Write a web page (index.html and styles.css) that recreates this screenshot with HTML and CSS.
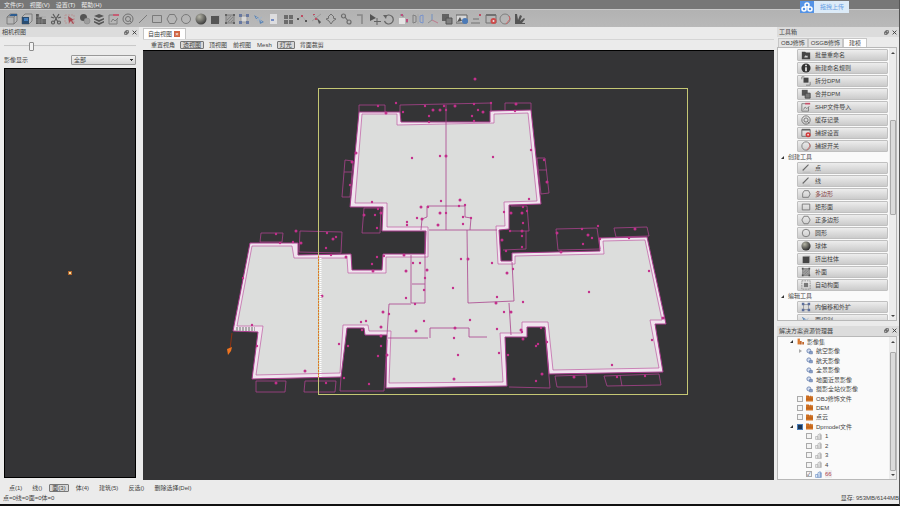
FILE: index.html
```
<!DOCTYPE html>
<html lang="zh-CN">
<head>
<meta charset="utf-8" />
<title>DPModeler</title>
<link rel="stylesheet" href="styles.css">
</head>

<body>
<svg class="defs" aria-hidden="true">
  <defs>
    <radialGradient id="ball" cx="0.35" cy="0.3" r="0.7"><stop offset="0" stop-color="#b5b5a5"/><stop offset="1" stop-color="#2e2e2e"/></radialGradient>
    <symbol id="i-open" viewBox="0 0 12 12"><path d="M1 4h7v7H1zM1 4l3-3h7l-3 3M11 1v7l-3 3" fill="none" stroke="#666" stroke-width=".8"/><path d="M3 3l2-2h6v2z" fill="#174f8c"/></symbol>
    <symbol id="i-cube" viewBox="0 0 12 12"><path d="M1 4l3-3h7v7l-3 3H1z" fill="#bbb" stroke="#666" stroke-width=".8"/><path d="M1 4h7v7H1z" fill="#123a63"/><path d="M3 5h4v3H3z" fill="#2f74bf"/></symbol>
    <symbol id="i-city" viewBox="0 0 12 12"><path d="M1 1h3v10H1zM4 4h3v7H4zM7 6h4v5H7z" fill="#4a4a4a"/><path d="M1 4h10M1 7h10M1 9h10M4 1v10M7 3v8" stroke="#999" stroke-width=".5"/></symbol>
    <symbol id="i-cut" viewBox="0 0 12 12"><path d="M3 1l5 8M9 1L4 9M1 4l3 1M11 4L8 5" stroke="#4a4a4a" stroke-width="1.2"/><g fill="none" stroke="#4a4a4a" stroke-width="1.2"><circle cx="3" cy="9.5" r="1.5"/><circle cx="9" cy="9.5" r="1.5"/></g></symbol>
    <symbol id="i-pick" viewBox="0 0 12 12"><path d="M1 2h9v8H1z" fill="none" stroke="#b88" stroke-width=".8" stroke-dasharray="2 1"/><path d="M4 3l6 4-2 .5 2 3-1 .5-2-3-2 2z" fill="#a8303c"/></symbol>
    <symbol id="i-blob" viewBox="0 0 12 12"><circle cx="4.500" cy="4.500" r="3.500" fill="#444"/><circle cx="8" cy="8" r="3" fill="#999" stroke="#777" stroke-width=".5"/></symbol>
    <symbol id="i-layers" viewBox="0 0 12 12"><path d="M6 1l5 2-5 2-5-2zM1 5l5 2 5-2v1.500L6 9 1 6.500zM1 8l5 2 5-2v1.500L6 12 1 9.500z" fill="#454545"/></symbol>
    <symbol id="i-import" viewBox="0 0 12 12"><path d="M1 2h5M1 2v9h8V6M3 9l2-3 2 2 3-3" fill="none" stroke="#777"/><path d="M5 1h6v2H5z" fill="#c8506a"/></symbol>
    <symbol id="i-ring" viewBox="0 0 12 12"><circle cx="6" cy="6" r="5" fill="none" stroke="#666"/><circle cx="6" cy="6" r="2.500" fill="none" stroke="#666"/><path d="M8 8l2 2" stroke="#666"/></symbol>
    <symbol id="i-line" viewBox="0 0 12 12"><path d="M2 10l8-8" stroke="#707070"/></symbol>
    <symbol id="i-pen" viewBox="0 0 12 12"><path d="M2 9l7-7" stroke="#666" stroke-width="1.300"/><path d="M2 11h9" stroke="#aaa" stroke-width=".6"/></symbol>
    <symbol id="i-rect" viewBox="0 0 12 12"><path d="M1.500 2.500h9v7h-9z" fill="none" stroke="#707070"/></symbol>
    <symbol id="i-hex" viewBox="0 0 12 12"><path d="M3.500 1.500h5L11 6l-2.500 4.500h-5L1 6z" fill="none" stroke="#707070"/></symbol>
    <symbol id="i-poly" viewBox="0 0 12 12"><path d="M4 2h5l2 4-2 4H2V5z" fill="none" stroke="#707070"/></symbol>
    <symbol id="i-circle" viewBox="0 0 12 12"><circle cx="6" cy="6" r="4.500" fill="none" stroke="#707070"/></symbol>
    <symbol id="i-ball" viewBox="0 0 12 12"><circle cx="6" cy="6" r="5.500" fill="url(#ball)"/></symbol>
    <symbol id="i-box" viewBox="0 0 12 12"><path d="M3 2h8v7l-1 1V3z" fill="#aaa"/><path d="M2 3h8v8H2z" fill="#444"/></symbol>
    <symbol id="i-patch" viewBox="0 0 12 12"><path d="M2 2h8v8H2z" fill="#a0a0a0" stroke="#777"/><path d="M3 7l4-4M4 9l5-5M7 9l2-2" stroke="#666" stroke-width=".6"/><path d="M1 1h2v2H1zM9 1h2v2H9zM1 9h2v2H1zM9 9h2v2H9z" fill="#555"/></symbol>
    <symbol id="i-auto" viewBox="0 0 12 12"><path d="M1 1h10v10H1z" fill="none" stroke="#888" stroke-dasharray="2 1"/><path d="M3.500 3.500h5v5h-5z" fill="#777"/></symbol>
    <symbol id="i-offset" viewBox="0 0 12 12"><path d="M3 3h6v6H3z" fill="#ddd" stroke="#999"/><path d="M1 1h3v3H1zM8 1h3v3H8zM1 8h3v3H1zM8 8h3v3H8z" fill="#5b6e9c"/></symbol>
    <symbol id="i-move" viewBox="0 0 12 12"><path d="M1 2l5 3-3 1zM6 6l5 3-4 2z" fill="#4c7cb4"/><path d="M3 4l6 5M4 8l5-4" stroke="#9cb4d0"/></symbol>
    <symbol id="i-page" viewBox="0 0 12 12"><path d="M3 1h7v10H3z" fill="#e4e4e6"/><path d="M4 6h3v2H4z" fill="#6a86c8"/></symbol>
    <symbol id="i-grid" viewBox="0 0 12 12"><path d="M2 2h4v4H2zM7 2h4v4H7zM2 7h4v4H2zM7 7h4v4H7z" fill="#606060"/></symbol>
    <symbol id="i-dots" viewBox="0 0 12 12"><path d="M2 6l4-3 4 5" fill="none" stroke="#999" stroke-width=".6"/><path d="M1 5h2v2H1zM9 7h2v2H9z" fill="#444"/><path d="M5 2h2v2H5z" fill="#c03b55"/></symbol>
    <symbol id="i-node" viewBox="0 0 12 12"><path d="M2 2l8 8M10 1L1 8" stroke="#888" stroke-width=".7"/><path d="M6 5l4 4-2 2z" fill="#444"/><path d="M2 1h2v1H2zM4 5h2v2H4z" fill="#c03b55"/></symbol>
    <symbol id="i-split" viewBox="0 0 12 12"><path d="M6 1l3 3-1 1 3 1-3 2-2 3-2-3-3-2 3-1-1-1z" fill="none" stroke="#666"/></symbol>
    <symbol id="i-link" viewBox="0 0 12 12"><g fill="none" stroke="#606060" stroke-width="1.200"><circle cx="3.500" cy="3" r="2"/><circle cx="9" cy="9" r="2"/><path d="M5 4l3 4"/></g></symbol>
    <symbol id="i-pipe" viewBox="0 0 12 12"><path d="M3 2h5v9" fill="none" stroke="#808080" stroke-width="1.500"/></symbol>
    <symbol id="i-arrow" viewBox="0 0 12 12"><path d="M1 1l6 4-6 3z" fill="#444"/><path d="M8 5v7M5 8.500h7" stroke="#555"/></symbol>
    <symbol id="i-undo" viewBox="0 0 12 12"><path d="M2 4a4.500 4.500 0 1 1-.5 4" fill="none" stroke="#555" stroke-width="1.200"/><path d="M0 2l4 0-1 4z" fill="#555"/></symbol>
    <symbol id="i-scale" viewBox="0 0 12 12"><path d="M1 5h6v6H1z" fill="#eee"/><path d="M2 2h3v2M9 7v3" stroke="#777" fill="none"/><path d="M8 6h2v3H8zM3 1h2v2H3z" fill="#c03b75"/></symbol>
    <symbol id="i-mirror" viewBox="0 0 12 12"><path d="M1 2l3 1v6l-3 1z" fill="none" stroke="#777"/><path d="M11 2L8 3v6l3 1z" fill="none" stroke="#6f8ed0"/><path d="M6 1v10" stroke="#999" stroke-width=".5"/></symbol>
    <symbol id="i-axis" viewBox="0 0 12 12"><path d="M5 1v6" stroke="#668ac4"/><path d="M5 7l-4 3" stroke="#888"/><path d="M5 7l6 3" stroke="#c07088"/></symbol>
    <symbol id="i-merge" viewBox="0 0 12 12"><path d="M1 1h7v7H1z" fill="#555"/><path d="M5 5h6v6H5z" fill="#777" stroke="#444"/></symbol>
    <symbol id="i-image" viewBox="0 0 12 12"><path d="M0 2h11v8H0z" fill="#ddd" stroke="#555"/><path d="M1 9l3-5 2 4z" fill="#444"/><circle cx="9" cy="8" r="3" fill="#3a70b8"/></symbol>
    <symbol id="i-level" viewBox="0 0 12 12"><path d="M1 10h9M3 6h6" stroke="#666"/><path d="M9 1h2v2H9z" fill="#c03b55"/></symbol>
    <symbol id="i-snap" viewBox="0 0 12 12"><path d="M1 2h10v8H1z" fill="none" stroke="#666"/><path d="M1 1h10v2H1z" fill="#666"/><circle cx="8.500" cy="8" r="3" fill="#d23a3a"/><circle cx="8.500" cy="8" r="1" fill="#eee"/></symbol>
    <symbol id="i-switch" viewBox="0 0 12 12"><circle cx="6" cy="6" r="5" fill="none" stroke="#777"/><path d="M10 3l1 3-4 5" stroke="#cf5a5a" fill="none"/></symbol>
    <symbol id="i-fan" viewBox="0 0 12 12"><path d="M1 11V1h2l1 6 2-5 2 1-2 5 4-3 1 1-3 4h3v1z" fill="#444"/></symbol>
    <symbol id="i-folder" viewBox="0 0 12 12"><path d="M1 2h4l1 1h5v8H1z" fill="#444"/><path d="M4 8l2-2v1h2v2H4z" fill="#ccc"/></symbol>
    <symbol id="i-info" viewBox="0 0 12 12"><circle cx="6" cy="6" r="5.500" fill="#333"/><path d="M5 2h2v2H5zM5 5h2v5H5z" fill="#eee"/></symbol>
    <symbol id="i-part" viewBox="0 0 12 12"><path d="M3 2h6v6H3z" fill="#444"/><path d="M1 4V1h3M11 7v4H6" fill="none" stroke="#777"/></symbol>
    <symbol id="i-cam" viewBox="0 0 12 12"><circle cx="5" cy="5" r="3.500" fill="#d3dced" stroke="#6e86b4" stroke-width="1.500"/><path d="M6 6h5v4H6z" fill="#8b9fc6" stroke="#5f78a8"/></symbol>
    <symbol id="i-set" viewBox="0 0 12 12"><path d="M1 1h4v10H1z" fill="#d9772c"/><path d="M5 5h3v6H5zM9 7h3v4H9z" fill="#c0662c"/></symbol>
    <symbol id="i-orange" viewBox="0 0 12 12"><path d="M0 1h4l1 1h7v9H0z" fill="#d27324"/><path d="M4 1v3M8 1v3M0 7h12" stroke="#a44e10"/></symbol>
    <symbol id="i-model" viewBox="0 0 12 12"><path d="M1 6h4v5H1zM5 3l4-2v10H5zM9 3h2v8H9z" fill="#eee" stroke="#a5a5a5"/></symbol>
    <symbol id="i-model-on" viewBox="0 0 12 12"><path d="M1 6h4v5H1zM5 3l4-2v10H5zM9 3h2v8H9z" fill="#e8f0fb" stroke="#5d87c0"/></symbol>
    <symbol id="i-float" viewBox="0 0 8 8"><path d="M3 1h4v4H3zM1 3h4v4H1z" fill="#ddd" stroke="#333"/></symbol>
    <symbol id="i-close" viewBox="0 0 8 8"><path d="M1 1l6 6M7 1L1 7" stroke="#333" stroke-width="1.400"/></symbol>
  </defs>
</svg>

<div class="app">
  <header class="menubar">
    <button>文件(F)</button><button>视图(V)</button><button>设置(T)</button><button>帮助(H)</button>
  </header>
  <div class="toolbar" id="toolbar"></div>
  <button class="upload"><span class="upload-logo"><svg viewBox="0 0 14 12"><g fill="none" stroke="#fff" stroke-width="1.500"><circle cx="7" cy="4" r="2"/><circle cx="4" cy="8" r="2"/><circle cx="10" cy="8" r="2"/></g></svg></span><span class="upload-text">拖拽上传</span></button>

  <main class="main">
    <section class="panel left">
      <h2 class="panel-title">相机视图<span><svg><use href="#i-float"/></svg><svg><use href="#i-close"/></svg></span></h2>
      <input type="range" class="slider" min="0" max="100" value="20" aria-label="缩放" />
      <div class="show-row">
        <label for="show">影像显示</label>
        <select id="show"><option>全部</option></select>
      </div>
      <div class="camera"><span class="camera-dot"></span></div>
    </section>

    <section class="center">
      <div class="doc-tabs"><button class="doc-tab">自由视图<span class="tab-close">×</span></button></div>
      <div class="view-bar">
        <button>重置视角</button><button class="on">透视图</button><button>顶视图</button><button>前视图</button><button>Mesh</button><button class="on">灯光</button><button>背面裁剪</button>
      </div>
      <svg class="scene" viewBox="143 51 631 429">
        <path class="outer" d="M359 112L400 112L401 122L490 122L490 111L531 110L541 204L509 205L509 229L499 230L501 261L512 261L512 253L600 251L599 238L647 237L666 324L655 324L663 372L549 374L545 327L527 327L527 337L505 337L507 386L386 388L387 335L365 335L364 328L347 328L341 377L252 379L258 332L233 331L250 243L298 243L298 255L351 254L352 270L382 270L383 254L425 254L426 231L382 231L383 207L350 207z"/>
        <path class="inner" d="M362 114L397 114L397 125L494 123L494 114L528 113L537 201L504 202L505 226L496 226L498 264L515 264L515 256L604 254L603 241L645 240L662 320L650 320L659 368L553 370L548 322L522 322L522 333L500 333L503 382L389 383L391 331L369 331L368 325L343 325L340 373L256 375L263 326L237 326L252 246L292 246L294 258L347 258L348 273L386 273L386 257L428 257L428 227L387 227L387 203L355 203z"/>
        <!-- 房间分隔线 -->
        <path class="wire" d="M446 105V230M421 230L422 219L427 217V206H465V217L471 218L470 230M429 230H497M467 230L468 303L514 301L512 262M411 255V303H425V231M412 284H425M411 304H389L387 335M388 338H428M430 338V328H469V337H487M509 303L511 335"/>
        <!-- 外侧阳台 -->
        <path class="wire" d="M359 112V105H385V112M400 112V105L491 103V112M505 111V103H531V110M345 160L353 161L350 197L342 197zM344 172H352M537 158H545L549 193L541 194zM539 170H547M364 208H381L380 233H362zM511 206H527L529 231H510M526 231V249L503 250M261 233H283L282 242H260zM300 231L342 232L341 253L299 252zM556 229L597 228L600 249L558 250zM614 228L647 227L649 236L616 237zM256 381H286L285 392H256zM305 381H336L335 392H304zM341 377L340 391H384L387 340M509 387L550 388L545 330M555 376L586 375L587 387H557zM604 376L659 374L661 385L607 386zM620 375L622 386"/>
        <g id="points"></g>
        <rect class="bound" x="318.500" y="88.500" width="369" height="306"/>
        <path class="bound-hot" d="M318.500 256V377"/>
        <path d="M320.500 258V377" class="hatch"/>
        <path class="handle" d="M236 329H255"/>
        <path d="M232 333L230 349" stroke="#8c3212"/><path d="M227 349l5-2-1 4-3 4z" fill="#ee7420"/>
      </svg>
    </section>

    <aside class="side">
      <section class="panel toolbox">
        <h2 class="panel-title">工具箱<span><svg><use href="#i-float"/></svg><svg><use href="#i-close"/></svg></span></h2>
        <div class="box-tabs"><button>OBJ修饰</button><button>OSGB修饰</button><button class="on">建模</button></div>
        <div class="box-body">
          <div class="box-list">
            <button><svg><use href="#i-folder"/></svg>批量重命名</button>
            <button><svg><use href="#i-info"/></svg>新建命名规则</button>
            <button><svg><use href="#i-part"/></svg>拆分DPM</button>
            <button><svg><use href="#i-merge"/></svg>合并DPM</button>
            <button><svg><use href="#i-import"/></svg>SHP文件导入</button>
            <button><svg><use href="#i-ring"/></svg>缓存记录</button>
            <button><svg><use href="#i-snap"/></svg>捕捉设置</button>
            <button><svg><use href="#i-switch"/></svg>捕捉开关</button>
            <h3>创建工具</h3>
            <button><svg><use href="#i-pen"/></svg>点</button>
            <button><svg><use href="#i-pen"/></svg>线</button>
            <button class="hot"><svg><use href="#i-poly"/></svg>多边形</button>
            <button><svg><use href="#i-rect"/></svg>矩形面</button>
            <button><svg><use href="#i-hex"/></svg>正多边形</button>
            <button><svg><use href="#i-circle"/></svg>圆形</button>
            <button><svg><use href="#i-ball"/></svg>球体</button>
            <button><svg><use href="#i-box"/></svg>挤出柱体</button>
            <button><svg><use href="#i-patch"/></svg>补面</button>
            <button><svg><use href="#i-auto"/></svg>自动构面</button>
            <h3>编辑工具</h3>
            <button><svg><use href="#i-offset"/></svg>内偏移和外扩</button>
            <button><svg><use href="#i-move"/></svg>面切割</button>
          </div>
          <div class="scroll box-scroll"><i class="up"></i><b></b><i class="down"></i></div>
        </div>
      </section>

      <section class="panel explorer">
        <h2 class="panel-title">解决方案资源管理器<span><svg><use href="#i-float"/></svg><svg><use href="#i-close"/></svg></span></h2>
        <div class="tree-body">
          <ul class="tree">
            <li class="l1"><em class="open"></em><svg><use href="#i-set"/></svg>影像集</li>
            <li class="l2"><em class="shut"></em><svg><use href="#i-cam"/></svg>航空影像</li>
            <li class="l2"><em></em><svg><use href="#i-cam"/></svg>航天影像</li>
            <li class="l2"><em></em><svg><use href="#i-cam"/></svg>全景影像</li>
            <li class="l2"><em></em><svg><use href="#i-cam"/></svg>地面近景影像</li>
            <li class="l2"><em></em><svg><use href="#i-cam"/></svg>摄影全站仪影像</li>
            <li class="l1"><em></em><input type="checkbox" id="t1" /><svg><use href="#i-orange"/></svg><label for="t1">OBJ修饰文件</label></li>
            <li class="l1"><em></em><input type="checkbox" id="t2" /><svg><use href="#i-orange"/></svg><label for="t2">DEM</label></li>
            <li class="l1"><em></em><input type="checkbox" id="t3" /><svg><use href="#i-orange"/></svg><label for="t3">点云</label></li>
            <li class="l1"><em class="open"></em><input type="checkbox" id="t4" class="part" /><svg><use href="#i-orange"/></svg><label for="t4">Dpmodel文件</label></li>
            <li class="l2"><em></em><input type="checkbox" id="m1" /><svg><use href="#i-model"/></svg><label for="m1">1</label></li>
            <li class="l2"><em></em><input type="checkbox" id="m2" /><svg><use href="#i-model"/></svg><label for="m2">2</label></li>
            <li class="l2"><em></em><input type="checkbox" id="m3" /><svg><use href="#i-model"/></svg><label for="m3">3</label></li>
            <li class="l2"><em></em><input type="checkbox" id="m4" /><svg><use href="#i-model"/></svg><label for="m4">4</label></li>
            <li class="l2 current"><em></em><input type="checkbox" id="m66" checked /><svg><use href="#i-model-on"/></svg><label for="m66">66</label></li>
          </ul>
          <div class="scroll tree-scroll"><i class="up"></i><b></b><i class="down"></i></div>
        </div>
      </section>
    </aside>
  </main>

  <footer class="footer">
    <div class="select-bar">
      <button>点(1)</button><button>线()</button><button class="on">面(3)</button><button>体(4)</button><button>建筑(5)</button><button>反选()</button><button>删除选择(Del)</button>
    </div>
    <div class="status"><span>点=0线=0面=0体=0</span><span>显存: 953MB/6144MB</span></div>
  </footer>
</div>
<script src="main.js"></script>
</body>
</html>
```
FILE: styles.css
```
*{margin:0; padding:0; box-sizing:border-box;}
body{
	height:100vh;
	overflow:hidden;
	background:#ebebeb;
	color:#444;
	font:6px/8px "Liberation Sans","Noto Sans CJK SC",sans-serif;
}
button,select,input{
	font:inherit;
	color:inherit;
	border:none;
	background:none;
	white-space:nowrap;
}
ul{list-style:none;}
.defs{position:absolute; width:0; height:0;}
.app{
	position:relative;
	display:flex;
	flex-direction:column;
	height:100%;
	border-bottom:2px solid #111;
	border-right:1px solid #555;
}
.menubar{
	display:flex;
	gap:6px;
	height:9px;
	padding-left:4px;
	background:#777;
	color:#eee;
}
.toolbar{
	display:grid;
	grid-template-columns:repeat(36,1fr);
	align-items:center;
	justify-items:center;
	height:18px;
	padding:0 372px 0 5px;
	border-top:1px solid #c9c9c9;
	background:linear-gradient(#b2b2b2,#b9b9b9);
}
.toolbar button{
	width:12px;
	height:12px;
}
.toolbar svg{
	display:block;
	width:12px;
	height:12px;
	opacity:.85;
}
.upload{
	position:absolute;
	top:1px;
	right:50px;
	display:flex;
	height:12px;
	background:#dcebf8;
	color:#69a0e4;
}
.upload-logo{
	width:14px;
	height:12px;
	background:#5493e6;
}
.upload-logo svg{display:block;}
.upload-text{
	padding:0 5px 0 6px;
	line-height:12px;
}
.main{
	flex:1;
	display:grid;
	grid-template-columns:140px 1fr 125px;
	min-height:0;
}
/* 面板 */
.panel{
	display:flex;
	flex-direction:column;
	min-height:0;
}
.panel-title{
	display:flex;
	align-items:center;
	justify-content:space-between;
	height:10px;
	padding:0 2px;
	background:#dcdcdc;
	font-size:6px;
	font-weight:normal;
}
.panel-title span{display:flex; gap:3px;}
.panel-title svg{width:5px; height:5px;}
.left .panel-title{margin-right:1px;}
.slider{
	appearance:none;
	height:10px;
	margin:4px 4px 0;
	background:linear-gradient(#b8b8b8,#fafafa) center/100% 2px no-repeat;
}
.slider::-webkit-slider-thumb{
	appearance:none;
	width:5px;
	height:9px;
	border:1px solid #8c8c8c;
	border-radius:1px;
	background:#f2f2f2;
}
.show-row{
	display:flex;
	align-items:center;
	justify-content:space-between;
	padding:4px 4px 3px;
}
.show-row select{
	appearance:none;
	width:65px;
	height:10px;
	padding-left:2px;
	border:1px solid #999;
	border-radius:1px;
	background:linear-gradient(#333,#333) 58px 3px/3px 1px no-repeat,linear-gradient(#333,#333) 59px 4px/1px 1px no-repeat,linear-gradient(#f3f3f3,#d5d5d5);
}
.camera{
	flex:1;
	display:grid;
	place-items:center;
	margin:0 4px 3px;
	border:1px solid #000;
	background:#343436;
}
.camera-dot{
	width:4px;
	height:4px;
	background:#f4e0a0;
	border:1px solid #b0642c;
}
.center{
	display:flex;
	flex-direction:column;
	min-width:0;
	min-height:0;
	padding:0 0 1px 3px;
}
.doc-tabs{height:12px; padding-top:1px;}
.doc-tab{
	display:flex;
	align-items:center;
	gap:2px;
	height:11px;
	padding:0 5px 0 4px;
	background:#fff;
	border:1px solid #c4c4c4;
	border-bottom:none;
}
.tab-close{
	width:6px;
	height:6px;
	background:#cf6544;
	color:#fff;
	line-height:6px;
}
.view-bar,.select-bar{
	display:flex;
	align-items:center;
	height:11px;
}
.view-bar{
	gap:4px;
	padding-left:7px;
	border-top:1px solid #d5d5d5;
}
.view-bar button,.select-bar button{
	height:8px;
	padding:0 1px;
	line-height:8px;
}
.view-bar button.on,.select-bar button.on{
	padding:0 2px;
	border:1px solid #777;
	border-radius:1px;
	background:#d8d8d8;
	line-height:6px;
}
/* 三维视图 */
.scene{
	flex:1;
	min-height:0;
	width:100%;
	background:#343436;
	border-top:1px solid #000;
}
.outer{fill:#f0e4ee; stroke:#a83a8c; stroke-width:1;}
.inner{fill:#dcdddc; stroke:#bd5aa2; stroke-width:.7;}
.wire{fill:none; stroke:#a9428d; stroke-width:.8;}
.point{fill:#c3308c;}
.bound{fill:none; stroke:#c5c774;}
.bound-hot{fill:none; stroke:#dc7526; stroke-dasharray:2 1;}
.hatch{fill:none; stroke:#fff; stroke-width:2; stroke-dasharray:1 1;}
.handle{stroke:#aaa; stroke-width:4; stroke-dasharray:2 1; fill:none;}
/* 右侧 */
.side{
	display:grid;
	grid-template-columns:100%;
	grid-template-rows:27fr 14fr;
	min-height:0;
	padding-left:3px;
}
.toolbox{padding-bottom:5px;}
.box-tabs{
	display:flex;
	height:10px;
	padding:1px 0 0 1px;
}
.box-tabs button{
	padding:0 2px;
	border:1px solid #c6c6c6;
	border-bottom:none;
	background:#e4e4e4;
}
.box-tabs .on{padding:0 5px; background:#fff;}
.box-body,.tree-body{
	flex:1;
	display:flex;
	min-height:0;
	margin-right:2px;
	border:1px solid #b8b8b8;
	background:#fafafa;
}
.box-list{
	flex:1;
	overflow:hidden;
	padding:1px 1px 0 19px;
}
.box-list button{
	display:flex;
	align-items:center;
	gap:4px;
	width:100%;
	height:12px;
	margin-bottom:1px;
	padding-left:3px;
	border:1px solid #c0c0c0;
	border-radius:1px;
	background:linear-gradient(#ededed,#cbcbcb);
}
.box-list svg{width:10px; height:10px;}
.box-list .hot{color:#8b4a4a;}
.box-list h3{
	height:9px;
	margin-left:-9px;
	font-size:6px;
	font-weight:normal;
	line-height:9px;
}
.box-list h3::before{
	content:"";
	float:left;
	margin:3px 4px 0 -7px;
	border-left:3px solid transparent;
	border-bottom:3px solid #333;
}
.scroll{
	display:flex;
	flex-direction:column;
	align-items:center;
	width:7px;
	background:#ececec;
}
.scroll b{
	width:6px;
	border:1px solid #aaa;
	border-radius:1px;
	background:#dadada;
}
.scroll i{
	border:2px solid transparent;
}
.scroll .up{border-top:none; border-bottom-color:#444; margin-top:4px;}
.scroll .down{border-bottom:none; border-top-color:#444; margin:auto 0 3px;}
.box-scroll b{height:35%; margin-top:66px;}
.tree-scroll b{height:84%; margin-top:9px;}
.tree-body{margin-bottom:1px;}
.tree{
	flex:1;
	display:grid;
	grid-auto-rows:1fr;
}
.tree li{
	display:flex;
	align-items:center;
	gap:3px;
	padding-left:11px;
}
.tree .l2{padding-left:20px;}
.tree svg{width:7px; height:7px;}
.tree em{
	width:4px;
	height:4px;
	margin-left:1px;
}
.tree .open::before{
	content:"";
	display:block;
	width:0;
	border-left:3px solid transparent;
	border-bottom:3px solid #333;
}
.tree .shut::before{
	content:"";
	display:block;
	width:0;
	border:2px solid transparent;
	border-left:3px solid #aaa;
	border-right:none;
}
.tree input{
	appearance:none;
	width:6px;
	height:6px;
	border:1px solid #aaa;
	background:#f4f4f4;
}
.tree input:checked::before{
	content:"✓";
	display:block;
	font-size:5px;
	line-height:4px;
	color:#334;
}
.tree .part{border-color:#4b7db8; background:#1c3552;}
.current label{color:#b04455; background:#eee;}
/* 底部 */
.footer{height:23px; padding-left:3px;}
.select-bar{
	height:13px;
	gap:8px;
	padding:1px 0 0 5px;
}
.select-bar button.on{margin:0 -2px;}
.status{
	display:flex;
	justify-content:space-between;
	line-height:9px;
}
```
FILE: main.js
```
var tools = ['open','cube','city','cut','pick','blob','layers','import','ring','line','rect','hex','circle','ball','box','patch','offset','move','page','grid','dots','node','split','link','pipe','arrow','undo','scale','mirror','axis','merge','image','level','snap','switch','fan'];
var html = '';
for(var i=0; i<tools.length; i++){
	html += '<button aria-label="' + tools[i] + '"><svg><use href="#i-' + tools[i] + '"/></svg></button>';
}
document.getElementById('toolbar').innerHTML = html;

// 顶点坐标
var pts = [
	[475,79],[378,106],[396,103],[386,113],[403,112],[425,106],[433,110],[429,116],[429,122],[440,110],[444,106],[446,110],[455,106],[474,104],[478,110],[483,112],[472,116],[491,103],[516,104],[515,111],[474,121],
	[356,153],[412,158],[440,156],[446,156],[493,157],[531,150],[352,162],[350,185],[544,160],[547,182],[372,202],[529,199],
	[421,207],[428,207],[441,201],[460,200],[459,206],[465,205],[440,213],[446,213],[417,218],[422,219],[463,217],[471,218],[438,225],[463,224],[407,225],
	[364,215],[378,209],[375,215],[381,213],[377,228],[504,212],[511,213],[523,207],[527,211],[522,213],[523,223],[510,231],[522,231],[522,236],[522,247],[502,240],[506,251],
	[276,234],[296,231],[280,243],[293,242],[301,243],[327,233],[336,237],[333,239],[326,248],[331,255],[346,257],[377,257],[372,264],[373,271],[384,256],
	[243,278],[322,296],[252,325],[257,346],[305,371],[339,344],[407,222],[404,255],[413,263],[420,263],[427,270],[425,278],[424,290],[406,271],[406,298],[415,304],[383,312],[389,314],[424,321],[416,331],[361,322],[366,321],[381,327],[362,330],[348,346],[381,336],[381,346],[378,356],[387,355],[344,378],[369,384],[276,383],[326,383],
	[461,259],[468,259],[453,288],[492,263],[507,273],[513,269],[497,297],[496,303],[523,302],[504,312],[511,312],[470,320],[497,329],[455,328],[454,338],[458,355],[454,379],[499,353],[508,355],[521,330],[541,328],[522,332],[523,339],[538,344],[536,346],[542,374],[536,381],[547,342],[557,233],[582,229],[598,226],[588,235],[592,238],[583,244],[561,252],[600,239],[629,238],[635,229],[649,271],[589,292],[663,318],[652,340],[612,365],[574,377],[617,377],[645,376]
];
var g = document.getElementById('points');
for(var i=0; i<pts.length; i++){
	var c = document.createElementNS('http://www.w3.org/2000/svg', 'circle');
	c.setAttribute('cx', pts[i][0]);
	c.setAttribute('cy', pts[i][1]);
	c.setAttribute('r', i%3 ? 1.2 : 1.5);
	c.setAttribute('class', 'point');
	g.appendChild(c);
}
```
